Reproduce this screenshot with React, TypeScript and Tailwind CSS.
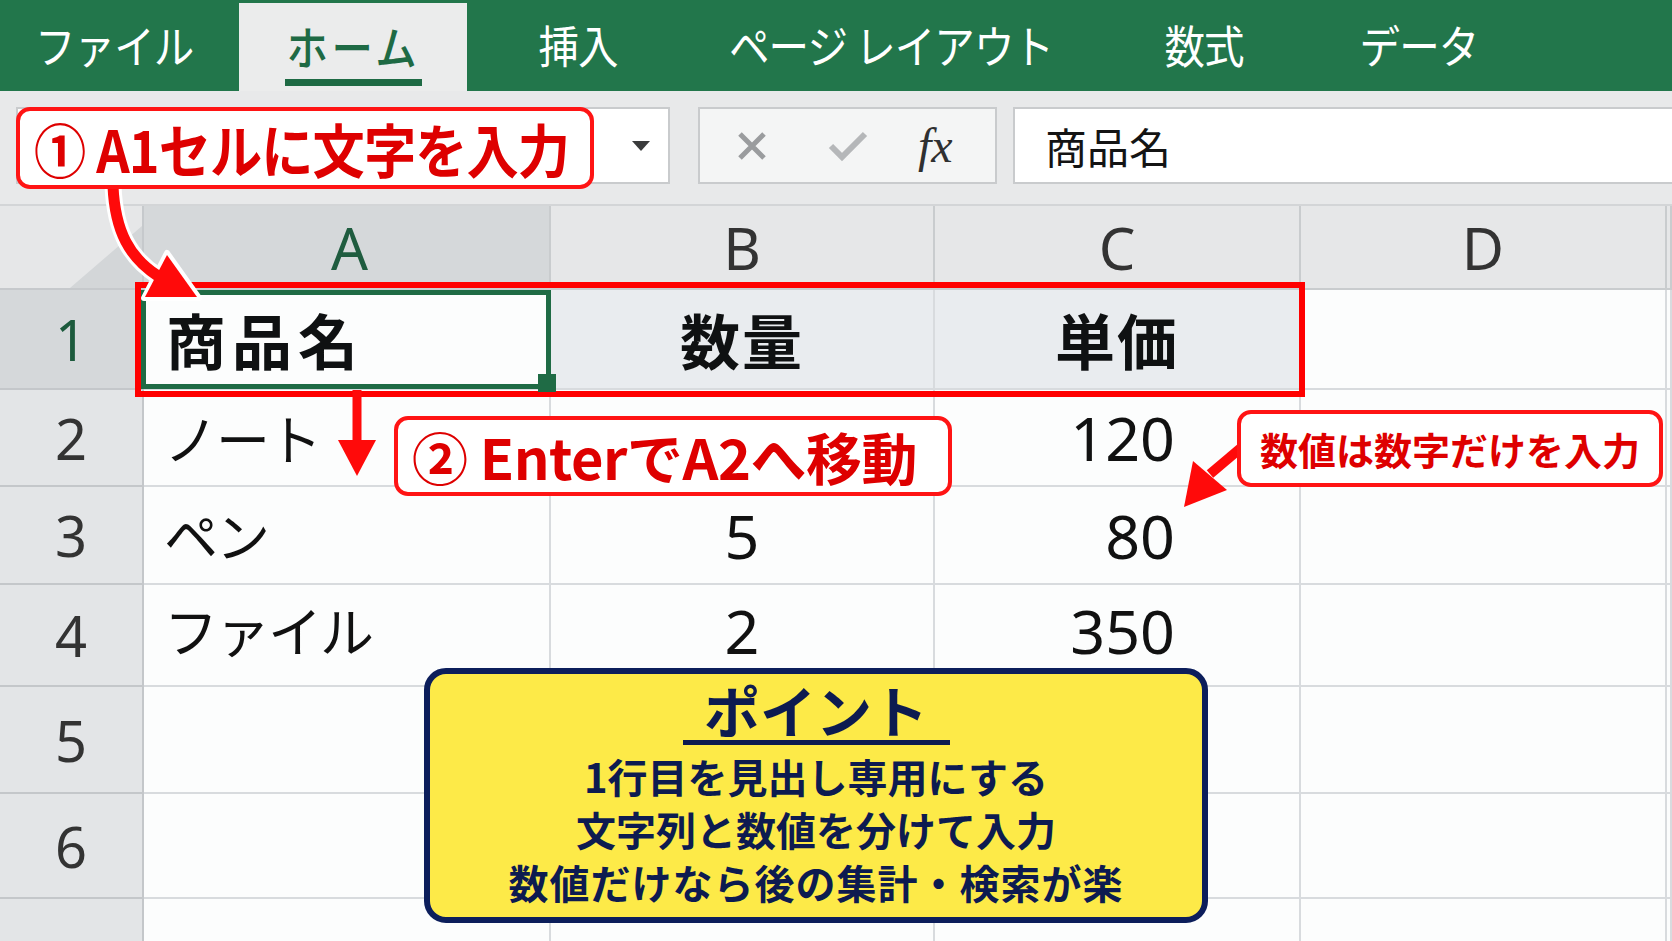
import React from "react";

const JP = "font-['Noto_Sans_CJK_JP','Noto_Sans',sans-serif]";
const LAT = "font-['Noto_Sans','Noto_Sans_CJK_JP',sans-serif]";

const cols = [144, 407, 384, 366, 366, 5];
const rows = [84, 100, 97, 98, 102, 107, 105, 60];

type Cell = { text: string; kind?: "head" | "num" | "mid" };

const data: Cell[][] = [
  [{ text: "商品名", kind: "head" }, { text: "数量", kind: "head" }, { text: "単価", kind: "head" }],
  [{ text: "ノート" }, { text: "" }, { text: "120", kind: "num" }],
  [{ text: "ペン" }, { text: "5", kind: "mid" }, { text: "80", kind: "num" }],
  [{ text: "ファイル" }, { text: "2", kind: "mid" }, { text: "350", kind: "num" }],
];

function Ribbon() {
  const tabs = [
    { label: "挿入", w: 222 },
    { label: "ページ レイアウト", w: 404 },
    { label: "数式", w: 222 },
    { label: "データ", w: 208 },
  ];
  return (
    <div className={`h-[91px] bg-[#22764b] flex items-end text-white ${JP}`}>
      <div className="w-[239px] shrink-0 h-[88px] pt-[19px] pl-[35px]">
        <span className="inline-block origin-left scale-x-90 text-[45px] leading-[46px] tracking-[-1px]">ファイル</span>
      </div>
      <div className="w-[228px] shrink-0 h-[88px] bg-[#ebecec] flex flex-col items-center pt-[19px]">
        <span className="inline-block scale-x-90 text-[46px] leading-[46px] text-[#1e6a44] font-medium tracking-[4px]">ホーム</span>
        <div className="w-[137px] h-[7px] bg-[#1e6a44] mt-[11px]" />
      </div>
      {tabs.map((t) => (
        <div
          key={t.label}
          style={{ width: t.w }}
          className="shrink-0 h-[88px] pt-[19px] text-center whitespace-nowrap"
        >
          <span className="inline-block scale-x-90 text-[45px] leading-[46px] tracking-[-1px]">{t.label}</span>
        </div>
      ))}
    </div>
  );
}

function FormulaBar() {
  return (
    <div className="h-[115px] bg-[#e8e9ea] flex pt-[16px] border-b-2 border-[#d3d5d7]">
      <div className="ml-[16px] w-[654px] shrink-0 h-[77px] bg-white border-2 border-[#c9cbcd] flex items-center justify-end pr-[17px]">
        <svg width="20" height="12" viewBox="0 0 20 12">
          <path d="M1 1 L19 1 L10 11 Z" fill="#3a3b3c" />
        </svg>
      </div>
      <div className="ml-[28px] w-[299px] shrink-0 h-[77px] bg-[#f4f5f5] border-2 border-[#c9cbcd] flex items-center pl-[36px]">
        <svg width="32" height="32" viewBox="0 0 32 32">
          <path d="M4 4 L28 28 M28 4 L4 28" stroke="#9a9c9e" strokeWidth="5" />
        </svg>
        <svg className="ml-[60px]" width="40" height="32" viewBox="0 0 40 32">
          <path d="M3 16 L14 27 L37 4" stroke="#b5b7b9" strokeWidth="6" fill="none" />
        </svg>
        <span className="ml-[50px] font-['Liberation_Serif',serif] italic text-[48px] leading-none text-[#2f3031]">fx</span>
      </div>
      <div className={`ml-[16px] flex-1 h-[77px] bg-white border-2 border-r-0 border-[#c9cbcd] flex items-center pl-[30px] text-[42px] text-[#141414] ${JP}`}>
        商品名
      </div>
    </div>
  );
}

function Grid() {
  const letters = ["A", "B", "C", "D", ""];
  return (
    <div className="flex flex-col">
      {rows.map((h, r) => (
        <div key={r} className="flex shrink-0" style={{ height: h }}>
          {cols.map((w, c) => {
            if (r === 0) {
              if (c === 0)
                return (
                  <div key={c} style={{ width: w }} className="shrink-0 bg-[#e6e7e8] border-r-2 border-b-2 border-[#c6c9cc] flex items-end justify-end">
                    <svg width="72" height="62" viewBox="0 0 72 62">
                      <path d="M0 62 L72 62 L72 0 Z" fill="#d3d6d8" />
                    </svg>
                  </div>
                );
              const sel = c === 1;
              return (
                <div
                  key={c}
                  style={{ width: w }}
                  className={`${sel ? "bg-[#d5d8da] text-[#1f5c3f] pl-[6px]" : "bg-[#e6e7e8] text-[#333]"} shrink-0 border-r-2 border-b-2 border-[#c9ccce] flex items-center justify-center text-[58px] ${LAT}`}
                >
                  {letters[c - 1]}
                </div>
              );
            }
            if (c === 0) {
              return (
                <div
                  key={c}
                  style={{ width: w }}
                  className={`${r === 1 ? "bg-[#d5d8da] text-[#1c5a3c]" : "bg-[#e3e5e7] text-[#333]"} shrink-0 border-r-2 border-b-2 border-[#c4c7ca] flex items-center justify-center text-[56px] ${LAT}`}
                >
                  {r < 7 ? r : ""}
                </div>
              );
            }
            const cell = data[r - 1]?.[c - 1];
            const headBg = r === 1 && (c === 2 || c === 3) ? "bg-[#e9ecef]" : "bg-[#fcfdfd]";
            const lift = r === 4 ? "pb-[10px]" : "";
            let content: React.ReactNode = null;
            if (cell && cell.text) {
              if (cell.kind === "head") {
                content = (
                  <span className={`w-full font-bold text-[60px] text-[#0f1112] ${c === 1 ? "text-left pl-[22px] tracking-[6px]" : "text-center tracking-[2px]"} ${JP}`}>
                    {cell.text}
                  </span>
                );
              } else if (cell.kind === "num") {
                content = <span className={`w-full text-right pr-[124px] text-[61px] text-[#111] ${LAT}`}>{cell.text}</span>;
              } else if (cell.kind === "mid") {
                content = <span className={`w-full text-center text-[61px] text-[#111] ${LAT}`}>{cell.text}</span>;
              } else {
                content = <span className={`w-full pl-[20px] text-[54px] text-[#111] tracking-[-2px] ${JP}`}>{cell.text}</span>;
              }
            }
            return (
              <div key={c} style={{ width: w }} className={`${headBg} ${lift} shrink-0 relative border-r-2 border-b-2 border-[#d8dbde] flex items-center leading-none`}>
                {content}
                {r === 1 && c === 1 && (
                  <div className="absolute left-[-3px] top-0 right-[-2px] bottom-[-1px] border-[5px] border-[#1f6b45]" />
                )}
              </div>
            );
          })}
        </div>
      ))}
    </div>
  );
}

function Arrows() {
  return (
    <svg className="absolute inset-0 pointer-events-none" width="1672" height="941" viewBox="0 0 1672 941">
      {/* curved arrow from callout 1 */}
      <path d="M113 186 C115 232 130 258 158 276" stroke="#fff" strokeWidth="17" fill="none" />
      <path d="M199 298 L144 298 L167 253 Z" fill="#fff" stroke="#fff" strokeWidth="6" strokeLinejoin="round" />
      <path d="M113 186 C115 232 130 258 158 276" stroke="#ff0a0a" strokeWidth="11" fill="none" />
      <path d="M197 297 L145 297 L167 255 Z" fill="#ff0a0a" />
      {/* down arrow */}
      <path d="M357 390 L357 446" stroke="#ff0a0a" strokeWidth="9" />
      <path d="M338 440 L376 440 L357 476 Z" fill="#ff0a0a" />
      {/* arrow from callout 3 */}
      <path d="M1242 447 L1210 474" stroke="#ff0a0a" strokeWidth="10" />
      <path d="M1184 507 L1193 461 L1227 490 Z" fill="#ff0a0a" />
    </svg>
  );
}

export default function App() {
  return (
    <div className="w-[1672px] h-[941px] relative overflow-hidden bg-[#e8e9ea]">
      <Ribbon />
      <FormulaBar />
      <Grid />

      {/* row 1 highlight */}
      <div className="absolute left-[135px] top-[282px] w-[1170px] h-[115px] border-[6px] border-[#ff0000] pointer-events-none" />
      <div className="absolute left-[538px] top-[374px] w-[18px] h-[18px] bg-[#1f6b45]" />

      <Arrows />

      {/* callout 1 */}
      <div className={`absolute left-[16px] top-[107px] w-[578px] h-[82px] bg-white border-[4px] border-[#ff1414] rounded-[14px] flex items-center pl-[14px] ${JP}`}>
        <span className="inline-block origin-left scale-x-90 text-[58px] font-bold text-[#de0000] leading-none whitespace-nowrap tracking-[-1px]">
          ① A1セルに文字を入力
        </span>
      </div>

      {/* callout 2 */}
      <div className={`absolute left-[394px] top-[416px] w-[558px] h-[80px] bg-white border-[4px] border-[#ff1414] rounded-[14px] flex items-center pl-[14px] text-[56px] font-bold text-[#de0000] leading-none whitespace-nowrap tracking-[-0.5px] ${JP}`}>
        ② EnterでA2へ移動
      </div>

      {/* callout 3 */}
      <div className={`absolute left-[1237px] top-[410px] w-[426px] h-[77px] bg-white border-[4px] border-[#ff1414] rounded-[14px] flex items-center justify-center text-[38px] font-bold text-[#de0000] leading-none whitespace-nowrap ${JP}`}>
        数値は数字だけを入力
      </div>

      {/* point box */}
      <div className={`absolute left-[424px] top-[668px] w-[784px] h-[255px] bg-[#fdea48] border-[6px] border-[#0c1e5b] rounded-[22px] flex flex-col items-center text-[#0d1b50] font-bold ${JP}`}>
        <div className="pt-[7px] text-[56px] leading-[56px]">ポイント</div>
        <div className="w-[267px] h-[5px] bg-[#0d1b50] mt-[3px]" />
        <div className="mt-[5px] text-[40px] leading-[53px] text-center">
          <div>1行目を見出し専用にする</div>
          <div>文字列と数値を分けて入力</div>
          <div className="tracking-[1px]">数値だけなら後の集計・検索が楽</div>
        </div>
      </div>
    </div>
  );
}
